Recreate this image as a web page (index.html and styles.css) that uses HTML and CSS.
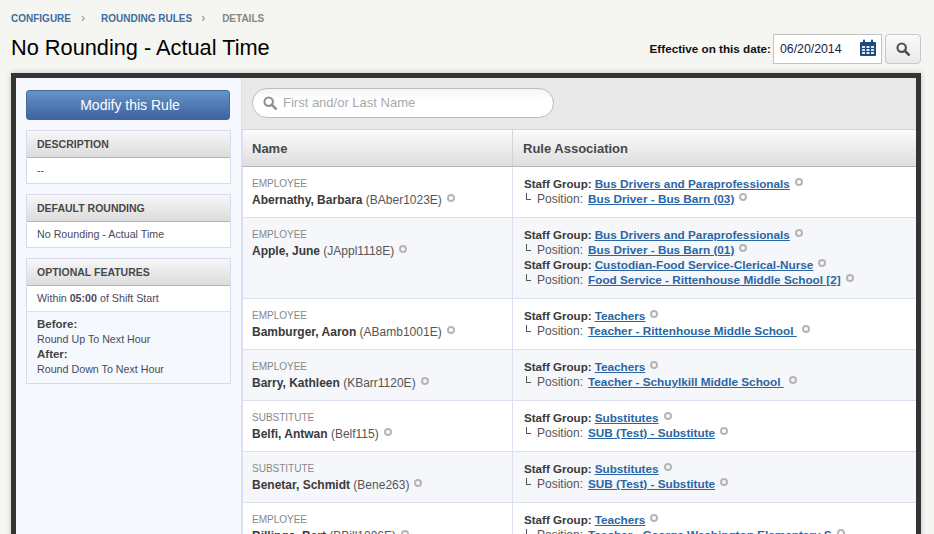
FILE: index.html
```html
<!DOCTYPE html>
<html lang="en">
<head>
    <meta charset="UTF-8">
    <title>No Rounding - Actual Time</title>
    <link rel="stylesheet" href="styles.css">
</head>
<body>
    <div class="breadcrumb">
        <a href="#">CONFIGURE</a><span class="crumb-sep">&rsaquo;</span><a href="#">ROUNDING RULES</a><span class="crumb-sep crumb-sep-last">&rsaquo;</span><span class="crumb-current">DETAILS</span>
    </div>

    <div class="page-head">
        <h1 class="title">No Rounding - Actual Time</h1>
        <div class="date-filter">
            <label class="date-label">Effective on this date:</label>
            <div class="date-box">
                <span class="date-value">06/20/2014</span>
                <svg class="calendar-icon" width="16" height="17" viewBox="0 0 16 17">
                    <path fill="#1d4a80" d="M1 3h2V1.500a1 1 0 0 1 2 0V3h6V1.500a1 1 0 0 1 2 0V3h2a1 1 0 0 1 1 1v12a1 1 0 0 1-1 1H1a1 1 0 0 1-1-1V4a1 1 0 0 1 1-1z"/>
                    <path fill="#dfe8f2" d="M2 7h3v2H2zM6.500 7h3v2h-3zM11 7h3v2h-3zM2 10h3v2H2zM6.500 10h3v2h-3zM11 10h3v2h-3zM2 13h3v2H2zM6.500 13h3v2h-3zM11 13h3v2h-3z"/>
                </svg>
            </div>
            <button class="search-btn" type="button">
                <svg width="14" height="14" viewBox="0 0 16 16"><circle cx="6.500" cy="6.500" r="4.800" fill="none" stroke="#4a4f55" stroke-width="2.400"/><path d="M10 10l4.500 4.500" stroke="#4a4f55" stroke-width="3" stroke-linecap="round"/></svg>
            </button>
        </div>
    </div>

    <div class="frame">
        <div class="sidebar">
            <button class="modify-btn" type="button">Modify this Rule</button>

            <div class="panel">
                <div class="panel-title">DESCRIPTION</div>
                <div class="panel-row">--</div>
            </div>

            <div class="panel">
                <div class="panel-title">DEFAULT ROUNDING</div>
                <div class="panel-row">No Rounding - Actual Time</div>
            </div>

            <div class="panel">
                <div class="panel-title">OPTIONAL FEATURES</div>
                <div class="panel-row">Within <b>05:00</b> of Shift Start</div>
                <div class="panel-row panel-row-alt">
                    <div class="rule-head">Before:</div>
                    <div>Round Up To Next Hour</div>
                    <div class="rule-head">After:</div>
                    <div>Round Down To Next Hour</div>
                </div>
            </div>
        </div>

        <div class="main">
            <div class="search-bar">
                <div class="search-input">
                    <svg width="14" height="14" viewBox="0 0 16 16"><circle cx="6.500" cy="6.500" r="4.800" fill="none" stroke="#8f8f8f" stroke-width="2.400"/><path d="M10 10l4.500 4.500" stroke="#8f8f8f" stroke-width="3" stroke-linecap="round"/></svg>
                    <span class="search-placeholder">First and/or Last Name</span>
                </div>
            </div>

            <div class="table-head">
                <div class="col-name">Name</div>
                <div class="col-assoc">Rule Association</div>
            </div>

            <div class="row">
                <div class="col-name">
                    <div class="emp-type">EMPLOYEE</div>
                    <div class="emp-line"><b>Abernathy, Barbara</b> (BAber1023E)<i class="dot"></i></div>
                </div>
                <div class="col-assoc">
                    <div class="line"><b>Staff Group:</b><a href="#">Bus Drivers and Paraprofessionals</a><i class="dot"></i></div>
                    <div class="line"><span class="corner"></span>Position:<a class="pos-link" href="#">Bus Driver - Bus Barn (03)</a><i class="dot"></i></div>
                </div>
            </div>

            <div class="row row-alt">
                <div class="col-name">
                    <div class="emp-type">EMPLOYEE</div>
                    <div class="emp-line"><b>Apple, June</b> (JAppl1118E)<i class="dot"></i></div>
                </div>
                <div class="col-assoc">
                    <div class="line"><b>Staff Group:</b><a href="#">Bus Drivers and Paraprofessionals</a><i class="dot"></i></div>
                    <div class="line"><span class="corner"></span>Position:<a class="pos-link" href="#">Bus Driver - Bus Barn (01)</a><i class="dot"></i></div>
                    <div class="line"><b>Staff Group:</b><a href="#">Custodian-Food Service-Clerical-Nurse</a><i class="dot"></i></div>
                    <div class="line"><span class="corner"></span>Position:<a class="pos-link" href="#">Food Service - Rittenhouse Middle School [2]</a><i class="dot"></i></div>
                </div>
            </div>

            <div class="row">
                <div class="col-name">
                    <div class="emp-type">EMPLOYEE</div>
                    <div class="emp-line"><b>Bamburger, Aaron</b> (ABamb1001E)<i class="dot"></i></div>
                </div>
                <div class="col-assoc">
                    <div class="line"><b>Staff Group:</b><a href="#">Teachers</a><i class="dot"></i></div>
                    <div class="line"><span class="corner"></span>Position:<a class="pos-link" href="#">Teacher - Rittenhouse Middle School&nbsp;</a><i class="dot"></i></div>
                </div>
            </div>

            <div class="row row-alt">
                <div class="col-name">
                    <div class="emp-type">EMPLOYEE</div>
                    <div class="emp-line"><b>Barry, Kathleen</b> (KBarr1120E)<i class="dot"></i></div>
                </div>
                <div class="col-assoc">
                    <div class="line"><b>Staff Group:</b><a href="#">Teachers</a><i class="dot"></i></div>
                    <div class="line"><span class="corner"></span>Position:<a class="pos-link" href="#">Teacher - Schuylkill Middle School&nbsp;</a><i class="dot"></i></div>
                </div>
            </div>

            <div class="row">
                <div class="col-name">
                    <div class="emp-type">SUBSTITUTE</div>
                    <div class="emp-line"><b>Belfi, Antwan</b> (Belf115)<i class="dot"></i></div>
                </div>
                <div class="col-assoc">
                    <div class="line"><b>Staff Group:</b><a href="#">Substitutes</a><i class="dot"></i></div>
                    <div class="line"><span class="corner"></span>Position:<a class="pos-link" href="#">SUB (Test) - Substitute</a><i class="dot"></i></div>
                </div>
            </div>

            <div class="row row-alt">
                <div class="col-name">
                    <div class="emp-type">SUBSTITUTE</div>
                    <div class="emp-line"><b>Benetar, Schmidt</b> (Bene263)<i class="dot"></i></div>
                </div>
                <div class="col-assoc">
                    <div class="line"><b>Staff Group:</b><a href="#">Substitutes</a><i class="dot"></i></div>
                    <div class="line"><span class="corner"></span>Position:<a class="pos-link" href="#">SUB (Test) - Substitute</a><i class="dot"></i></div>
                </div>
            </div>

            <div class="row">
                <div class="col-name">
                    <div class="emp-type">EMPLOYEE</div>
                    <div class="emp-line"><b>Billings, Bart</b> (BBill1006E)<i class="dot"></i></div>
                </div>
                <div class="col-assoc">
                    <div class="line"><b>Staff Group:</b><a href="#">Teachers</a><i class="dot"></i></div>
                    <div class="line"><span class="corner"></span>Position:<a class="pos-link" href="#">Teacher - George Washington Elementary S</a><i class="dot"></i></div>
                </div>
            </div>
        </div>
    </div>
</body>
</html>
```

FILE: styles.css
```css
* {
    margin: 0;
    padding: 0;
    box-sizing: border-box;
}

html, body {
    height: 534px;
    overflow: hidden;
}

body {
    font-family: "Liberation Sans", Arial, sans-serif;
    background: #f5f5f1;
    color: #444;
    padding: 12px 13px 0 11px;
}

a {
    color: #2a66a5;
}

/* breadcrumb */
.breadcrumb {
    font-size: 10px;
    font-weight: bold;
    line-height: 12px;
    height: 12px;
}

.breadcrumb a {
    color: #3f6d9f;
    text-decoration: none;
}

.crumb-sep {
    color: #8a8a8a;
    font-weight: normal;
    font-size: 12px;
    margin: 0 16px 0 10px;
}

.crumb-sep-last {
    margin: 0 17px 0 9px;
}

.crumb-current {
    color: #868686;
}

/* title + date */
.page-head {
    display: flex;
    justify-content: space-between;
    align-items: flex-start;
    height: 49px;
    padding-top: 2px;
}

.title {
    font-size: 21.750px;
    font-weight: normal;
    color: #000;
    line-height: 42px;
    margin-top: 1px;
}

.date-filter {
    display: flex;
    align-items: center;
    height: 30px;
    margin-top: 8px;
}

.date-label {
    font-size: 11.700px;
    font-weight: bold;
    color: #111;
    margin: 0 2px 2px 0;
}

.date-box {
    width: 109px;
    height: 30px;
    background: #fff;
    border: 1px solid #c3c3c3;
    display: flex;
    align-items: center;
    justify-content: space-between;
    padding: 0 5px 0 6px;
    font-size: 12.300px;
    color: #222244;
}

.calendar-icon {
    margin-top: -4px;
}

.search-btn {
    width: 36px;
    height: 30px;
    margin-left: 3px;
    border: 1px solid #c8c8c8;
    border-radius: 4px;
    background: linear-gradient(#fafafa, #e9e9e9);
    display: flex;
    align-items: center;
    justify-content: center;
}

/* main frame */
.frame {
    width: 910px;
    height: 480px;
    border: 5px solid #333;
    border-bottom: 0;
    display: flex;
    box-shadow: 0 0 6px rgba(0,0,0,0.2);
    background: #f5f9fd;
    overflow: hidden;
}

.sidebar {
    width: 226px;
    flex: none;
    padding: 12px 10px 0 10px;
    border-right: 1px solid #dcdff0;
}

.modify-btn {
    display: block;
    width: 204px;
    height: 30px;
    padding-left: 4px;
    border: 1px solid #45699c;
    border-radius: 3px;
    background: linear-gradient(#6593c8, #3f63a0);
    color: #fff;
    font-family: inherit;
    font-size: 14px;
    margin-bottom: 10px;
}

.panel {
    width: 205px;
    border: 1px solid #d9dbec;
    background: #fff;
    margin-bottom: 10px;
    font-size: 10.700px;
    color: #4a4a60;
}

.panel-title {
    height: 27px;
    line-height: 26px;
    padding-left: 10px;
    font-size: 10.500px;
    font-weight: bold;
    color: #484848;
    background: linear-gradient(#f7f7f7, #dcdcdc);
    border-bottom: 1px solid #b5b5b5;
}

.panel-row {
    padding: 0 10px;
    line-height: 25px;
    height: 25px;
}

.panel-row-alt {
    height: auto;
    line-height: 15px;
    padding: 5px 10px 6px;
    background: #f5f9fd;
    border-top: 1px solid #dcdff0;
}

.rule-head {
    font-size: 11.500px;
    font-weight: bold;
    color: #444;
}

/* right side */
.main {
    flex: 1;
    background: #fff;
    min-width: 0;
}

.search-bar {
    height: 52px;
    background: #e9e9e9;
    border-bottom: 1px solid #d6d6d6;
    padding: 10px 0 0 10px;
}

.search-input {
    width: 302px;
    height: 30px;
    background: linear-gradient(#f4f4f4, #fff 40%);
    border: 1px solid #bdbdbd;
    border-radius: 15px;
    display: flex;
    align-items: center;
    padding-left: 10px;
    padding-bottom: 1px;
}

.search-placeholder {
    font-size: 13px;
    color: #a9a9a9;
    margin-left: 6px;
}

.table-head {
    display: flex;
    height: 37px;
    background: linear-gradient(#fbfbfb, #dedede);
    border-bottom: 1px solid #b5b5b5;
    font-size: 13px;
    font-weight: bold;
    color: #484848;
    line-height: 37px;
}

.table-head .col-name {
    border-right-color: #d4d4d4;
}

.row {
    display: flex;
    border-bottom: 1px solid #dcdff0;
    font-size: 12px;
    line-height: 15px;
}

.row-alt {
    background: #f5f7fb;
}

.col-name {
    width: 271px;
    flex: none;
    padding-left: 9px;
    border-right: 1px solid #dcdff0;
    border-left: 1px solid #dcdff0;
}

.col-assoc {
    flex: 1;
    padding-left: 10px;
}

.row .col-name {
    padding-top: 9px;
}

.row .col-assoc {
    padding: 9px 0 11px 11px;
}

.emp-type {
    font-size: 10px;
    color: #888;
    line-height: 16px;
    height: 17px;
}

.emp-line {
    color: #555;
    height: 15px;
}

.emp-line b, .line b {
    color: #3a3a3a;
}

.line {
    white-space: nowrap;
    color: #555;
    height: 15px;
}

.line b {
    font-size: 11.600px;
}

.line a {
    margin-left: 3px;
    font-size: 11.750px;
    font-weight: bold;
    text-decoration: underline;
}

.line a.pos-link {
    margin-left: 5px;
}

/* corner mark in front of Position */
.corner {
    display: inline-block;
    width: 5px;
    height: 7px;
    margin: 0 6px 0 2px;
    border-left: 1px solid #555;
    border-bottom: 1px solid #555;
    vertical-align: 3px;
}

/* the small grey info ring after names */
.dot {
    display: inline-block;
    width: 8px;
    height: 8px;
    margin-left: 5px;
    border: 2px solid #b5b5b5;
    border-radius: 50%;
    vertical-align: 2px;
}
```
